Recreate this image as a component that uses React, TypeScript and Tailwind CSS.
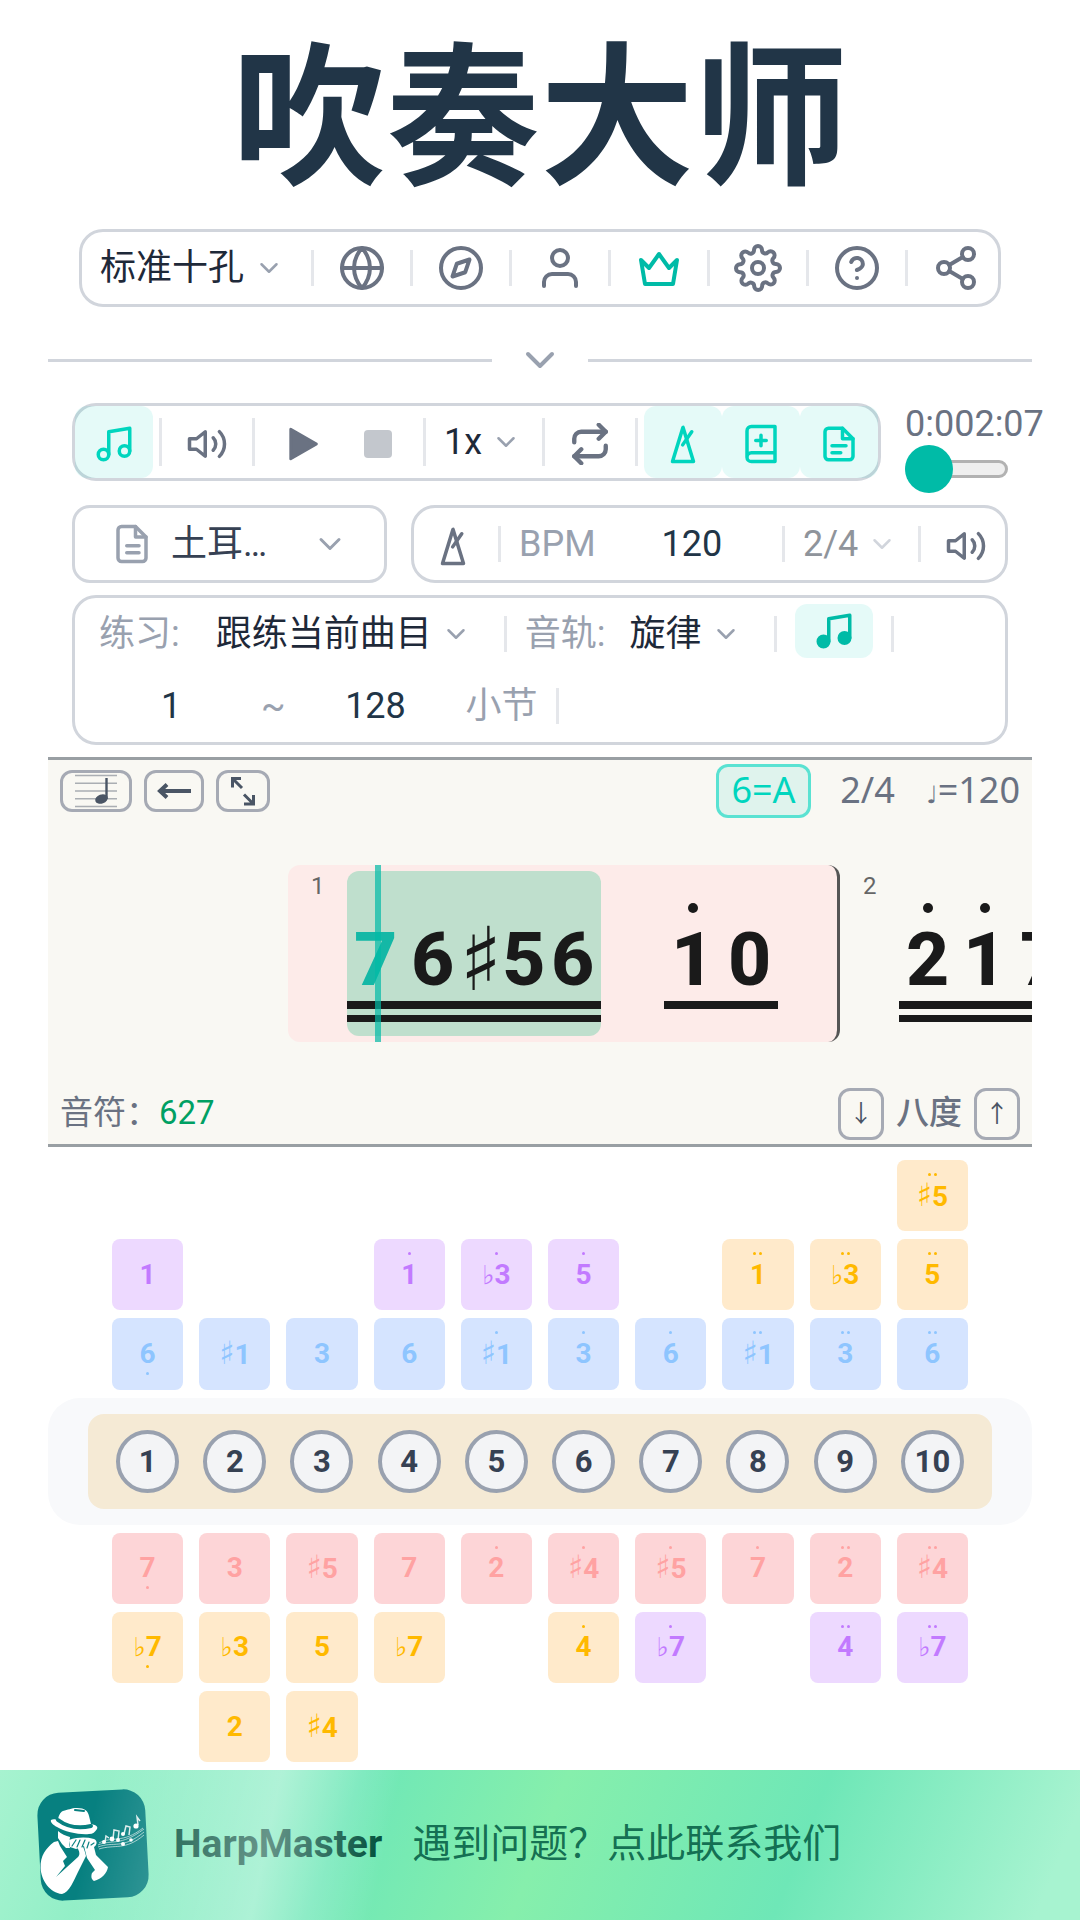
import React from 'react'
import {
  FiChevronDown,
  FiCompass,
  FiGlobe,
  FiHelpCircle,
  FiMusic,
  FiRepeat,
  FiSettings,
  FiShare2,
  FiUser,
  FiVolume2,
} from 'react-icons/fi'

type SvgProps = { className?: string; children: React.ReactNode }

function Svg({ className, children }: SvgProps) {
  return (
    <svg
      viewBox="0 0 24 24"
      fill="none"
      stroke="currentColor"
      strokeWidth="2"
      strokeLinecap="round"
      strokeLinejoin="round"
      className={className}
      aria-hidden="true"
    >
      {children}
    </svg>
  )
}

const CrownIcon = () => (
  <Svg className="size-12">
    <path d="M3 8l4 4 5-7 5 7 4-4-2 12H5L3 8z" />
  </Svg>
)

const MetronomeIcon = () => (
  <Svg className="size-[42px]">
    <path d="M12 2.5L6 22h12L12 2.5z" />
    <path d="M11.8 12.5l5.2-7.5" />
  </Svg>
)

const BookIcon = () => (
  <Svg className="size-[42px]">
    <path d="M4 19.5v-15A2.5 2.5 0 0 1 6.5 2H20v20H6.5a2.5 2.5 0 0 1 0-5H20" />
    <path d="M12 7v6M9 10h6" />
  </Svg>
)

const SheetIcon = () => (
  <Svg className="size-[42px]">
    <path d="M14 3H6a2 2 0 0 0-2 2v14a2 2 0 0 0 2 2h12a2 2 0 0 0 2-2V9z" />
    <path d="M14 3v6h6M8 13h8M8 17h5" />
  </Svg>
)

const FileIcon = () => (
  <Svg className="size-[42px] shrink-0 text-gray-400">
    <path d="M14 2H6a2 2 0 0 0-2 2v16a2 2 0 0 0 2 2h12a2 2 0 0 0 2-2V8z" />
    <path d="M14 2v6h6M9 13h7M9 17h7" />
  </Svg>
)

const Divider = ({ tall }: { tall?: boolean }) => (
  <span className={tall ? 'h-12 w-[3px] shrink-0 bg-gray-200' : 'h-9 w-[3px] shrink-0 bg-gray-200'} />
)

type SelectProps = { label: string; value: string; className: string; chevron?: string }

function Select({ label, value, className, chevron = 'right-[3px] text-gray-400' }: SelectProps) {
  return (
    <div className="relative flex shrink-0 items-center">
      <select aria-label={label} className={`h-14 appearance-none bg-transparent ${className}`}>
        <option>{value}</option>
      </select>
      <FiChevronDown className={`pointer-events-none absolute size-[30px] ${chevron}`} />
    </div>
  )
}

type ToolProps = { label: string; active?: boolean; children: React.ReactNode }

function Tool({ label, active, children }: ToolProps) {
  return (
    <button
      type="button"
      aria-label={label}
      className={`flex h-[72px] w-[78px] shrink-0 items-center justify-center rounded-xl pt-1 ${
        active ? 'bg-teal-400/10 text-teal-400' : 'text-gray-500'
      }`}
    >
      {children}
    </button>
  )
}

const menu = [
  { label: '语言', icon: <FiGlobe className="size-12" /> },
  { label: '发现', icon: <FiCompass className="size-12" /> },
  { label: '我的', icon: <FiUser className="size-12" /> },
  { label: '会员', icon: <CrownIcon />, color: 'text-teal-500' },
  { label: '设置', icon: <FiSettings className="size-12" /> },
  { label: '帮助', icon: <FiHelpCircle className="size-12" /> },
  { label: '分享', icon: <FiShare2 className="size-12" /> },
]

type Note = { text: string; sharp?: boolean; dot?: boolean; current?: boolean }

function Beat({ notes, lines, active }: { notes: Note[]; lines: number; active?: boolean }) {
  return (
    <div className={`h-[165px] rounded-xl pt-8 ${active ? 'bg-[#bfdfcd]' : ''}`}>
      <div className="flex">
        {notes.map((note, i) => (
          <div key={i} className={`flex flex-col items-center gap-[9px] ${note.sharp ? 'w-[83px]' : 'w-[57px]'}`}>
            <span className={`size-2.5 rounded-full ${note.dot ? 'bg-[#1a1a1a]' : ''}`} />
            <span
              className={`flex h-[75px] text-[75px] leading-[75px] font-extrabold ${
                note.current ? 'text-[#14b8a6]' : 'text-[#1a1a1a]'
              }`}
            >
              {note.sharp && <span className="font-['DejaVu_Sans'] text-[88px] leading-[75px]">♯</span>}
              {note.text}
            </span>
          </div>
        ))}
      </div>
      <div className="mt-1 flex flex-col gap-1.5">
        <div className="h-2 bg-[#1a1a1a]" />
        {lines > 1 && <div className="h-[7px] bg-[#1a1a1a]" />}
      </div>
    </div>
  )
}

const tones = {
  purple: 'bg-[#edd9ff] text-purple-400',
  blue: 'bg-[#d5e4ff] text-[#8ec5ff]',
  orange: 'bg-[#ffeacb] text-amber-400',
  red: 'bg-[#fdd5d7] text-[#ffa2a2]',
}

type Pad = { n: string; tone: keyof typeof tones; up?: number; down?: number } | null

const p = (n: string, tone: keyof typeof tones, up = 0, down = 0): Pad => ({ n, tone, up, down })

const blowRows: Pad[][] = [
  [null, null, null, null, null, null, null, null, null, p('♯5', 'orange', 2)],
  [
    p('1', 'purple'), null, null, p('1', 'purple', 1), p('♭3', 'purple', 1), p('5', 'purple', 1), null,
    p('1', 'orange', 2), p('♭3', 'orange', 2), p('5', 'orange', 2),
  ],
  [
    p('6', 'blue', 0, 1), p('♯1', 'blue'), p('3', 'blue'), p('6', 'blue'), p('♯1', 'blue', 1),
    p('3', 'blue', 1), p('6', 'blue', 1), p('♯1', 'blue', 2), p('3', 'blue', 2), p('6', 'blue', 2),
  ],
]

const drawRows: Pad[][] = [
  [
    p('7', 'red', 0, 1), p('3', 'red'), p('♯5', 'red'), p('7', 'red'), p('2', 'red', 1),
    p('♯4', 'red', 1), p('♯5', 'red', 1), p('7', 'red', 1), p('2', 'red', 2), p('♯4', 'red', 2),
  ],
  [
    p('♭7', 'orange', 0, 1), p('♭3', 'orange'), p('5', 'orange'), p('♭7', 'orange'), null,
    p('4', 'orange', 1), p('♭7', 'purple', 1), null, p('4', 'purple', 2), p('♭7', 'purple', 2),
  ],
  [null, p('2', 'orange'), p('♯4', 'orange'), null, null, null, null, null, null, null],
]

function Dots({ count, className }: { count: number; className: string }) {
  return (
    <span className={`absolute inset-x-0 flex justify-center gap-[3px] ${className}`}>
      {Array.from({ length: count }, (_, i) => (
        <i key={i} className="size-[3px] rounded-full bg-current" />
      ))}
    </span>
  )
}

function PadLabel({ text }: { text: string }) {
  const sign = text.length > 1 ? text[0] : ''
  return (
    <span className="flex items-baseline">
      {sign && (
        <span
          className={`font-['DejaVu_Sans'] ${
            sign === '♭' ? 'text-[26px] leading-none font-normal' : 'text-[32px] leading-[28px]'
          }`}
        >
          {sign}
        </span>
      )}
      <span>{text.slice(-1)}</span>
    </span>
  )
}

function PadRow({ pads }: { pads: Pad[] }) {
  return (
    <div className="grid grid-cols-10 gap-4 px-16">
      {pads.map((pad, i) =>
        pad ? (
          <div
            key={i}
            className={`relative flex aspect-square items-center justify-center rounded-lg text-[28px] leading-none font-bold ${tones[pad.tone]}`}
          >
            {!!pad.up && <Dots count={pad.up} className="top-[13px]" />}
            <PadLabel text={pad.n} />
            {!!pad.down && <Dots count={pad.down} className="bottom-[15px]" />}
          </div>
        ) : (
          <div key={i} className="aspect-square" />
        )
      )}
    </div>
  )
}

function Logo() {
  return (
    <svg viewBox="0 0 114 114" className="size-[114px] shrink-0" aria-hidden="true">
      <rect x="3" y="3" width="108" height="108" rx="22" fill="#078080" transform="rotate(-3 57 57)" />
      <g fill="#fff">
        <path d="M22 33c0-4 2-9 5-10 5-1 8-3 14-3 8 0 11 3 12 8l2 8c6 1 7 3 6 5-2 3-4 5-8 5-9 1-24-2-32-7-4-2-7-5-6-7 2-1 5-1 7 1z" />
        <path d="M22 43c3 3 8 5 12 6l-1 7 1 4h-4l-4-4-4-6z" />
        <path d="M18 54C10 60 4 68 4.600 80 5 92 14 105 26 106c7-1 12-14 16-22l8-16c-1-4-2-8-4-11l-5 2c3 5 3 8 1 10L20 89l9-11-2-5 4-4-7-11-2-5z" />
        <path d="M33 52c9-3 17-3 25-1 4 2 3 6 0 8l2 8 12 12c-1 6-6 12-14 14-3-2-3-5-2-8l3-3-8-12-3-12-8 3-6-2z" />
      </g>
      <g fill="none" stroke="#078080" strokeLinecap="round">
        <path d="M22 32c8 6 20 9 33 6" strokeWidth="4" />
        <path d="M39 22l9 1" strokeWidth="2" />
        <path d="M36 58l4-6M41 59l3-7M46 59l3-7M51 60l2-6M55 57l3-2" strokeWidth="1.200" />
      </g>
      <g fill="none" stroke="#fff" strokeWidth="0.7" opacity="0.85">
        <path d="M62 57c14-6 22 2 46-16M62 59c16-6 24 3 46-15M63 61c16-5 26 2 45-14M63 55c12-7 24 1 44-15" />
        <path d="M69 54l1-6 3 2M77 51l1-9 5 1-1 9M88 46l2-8 4 1-1 8M102 37l-1-8 3 4" strokeWidth="1.5" />
      </g>
      <g fill="#fff">
        <circle cx="68" cy="54" r="2" />
        <circle cx="76" cy="51" r="2.4" />
        <circle cx="82" cy="52" r="2" />
        <circle cx="87" cy="56" r="2" />
        <circle cx="87" cy="46" r="2" />
        <circle cx="100" cy="38" r="2.6" />
        <circle cx="95" cy="52" r="1.8" />
      </g>
    </svg>
  )
}

export default function App() {
  const scoreButton = 'flex h-[42px] items-center justify-center rounded-xl border-[3px] border-[#a6aab4] text-gray-600'
  const octaveButton =
    'flex h-[52px] w-[46px] items-center justify-center rounded-xl border-[3px] border-[#a6aab4] text-2xl leading-none text-gray-600'

  return (
    <div className="flex min-h-screen flex-col overflow-hidden bg-white font-[Roboto,'Noto_Sans_CJK_SC','DejaVu_Sans',sans-serif] text-4xl text-gray-800">
      <main className="flex flex-col px-12">
        <h1 className="mt-11 text-center text-[154px] leading-[154px] font-bold text-[#213547]">吹奏大师</h1>

        <nav className="mx-auto mt-[31px] flex h-[78px] items-center gap-6 rounded-3xl border-[3px] border-gray-300 px-[18px]">
          <Select label="口琴类型" value="标准十孔" className="w-[187px]" />
          {menu.map((item) => (
            <React.Fragment key={item.label}>
              <Divider />
              <button type="button" aria-label={item.label} className={item.color ?? 'text-gray-500'}>
                {item.icon}
              </button>
            </React.Fragment>
          ))}
        </nav>

        <div className="mt-[29px] flex items-center gap-6 text-gray-400">
          <span className="h-[3px] flex-1 bg-gray-300" />
          <button type="button" aria-label="展开">
            <FiChevronDown className="size-12" />
          </button>
          <span className="h-[3px] flex-1 bg-gray-300" />
        </div>

        <div className="px-6">
          <div className="mt-[19px] flex items-start gap-6">
            <div className="flex h-[78px] shrink-0 items-center gap-1.5 rounded-3xl border-[3px] border-gray-300">
              <Tool label="音符" active>
                <FiMusic className="size-[42px]" />
              </Tool>
              <Divider tall />
              <Tool label="音量">
                <FiVolume2 className="size-[42px]" />
              </Tool>
              <Divider tall />
              <div className="flex">
                <Tool label="播放">
                  <Svg className="size-[42px]">
                    <path d="M6.7 3.5v17L21.4 12z" fill="currentColor" strokeWidth="1.6" />
                  </Svg>
                </Tool>
                <Tool label="停止">
                  <span className="size-7 rounded-sm bg-gray-500/40" />
                </Tool>
              </div>
              <Divider tall />
              <Select label="速度" value="1x" className="w-[104px] pl-3" chevron="right-[15px] text-gray-400" />
              <Divider tall />
              <Tool label="循环">
                <FiRepeat className="size-[42px] stroke-[2.5]" />
              </Tool>
              <Divider tall />
              <div className="flex">
                <Tool label="节拍器" active>
                  <MetronomeIcon />
                </Tool>
                <Tool label="曲库" active>
                  <BookIcon />
                </Tool>
                <Tool label="曲谱" active>
                  <SheetIcon />
                </Tool>
              </div>
            </div>

            <div className="flex min-w-0 flex-1 flex-col">
              <div className="flex justify-between leading-[42px] text-gray-500">
                <span>0:00</span>
                <span>2:07</span>
              </div>
              <input
                type="range"
                aria-label="进度"
                min={0}
                max={127}
                defaultValue={0}
                className="h-12 w-full appearance-none bg-transparent [&::-webkit-slider-runnable-track]:h-[18px] [&::-webkit-slider-runnable-track]:rounded-full [&::-webkit-slider-runnable-track]:border-[3px] [&::-webkit-slider-runnable-track]:border-[#b2b2b2] [&::-webkit-slider-runnable-track]:bg-[#efefef] [&::-webkit-slider-thumb]:-mt-[18px] [&::-webkit-slider-thumb]:-ml-[3px] [&::-webkit-slider-thumb]:size-12 [&::-webkit-slider-thumb]:appearance-none [&::-webkit-slider-thumb]:rounded-full [&::-webkit-slider-thumb]:bg-teal-500"
              />
            </div>
          </div>

          <div className="mt-3 flex gap-6">
            <button
              type="button"
              className="flex h-[78px] w-[315px] items-center gap-[18px] rounded-[18px] border-[3px] border-gray-300 px-9 text-gray-700"
            >
              <FileIcon />
              <span className="flex-1 text-left">土耳…</span>
              <FiChevronDown className="size-9 text-gray-400" />
            </button>

            <div className="flex h-[78px] min-w-0 flex-1 items-center rounded-3xl border-[3px] border-gray-300">
              <Tool label="节拍器">
                <MetronomeIcon />
              </Tool>
              <span className="w-1.5" />
              <Divider />
              <label htmlFor="bpm" className="pl-[18px] text-gray-400">
                BPM
              </label>
              <input
                id="bpm"
                defaultValue="120"
                className="min-w-0 flex-1 bg-transparent pl-1.5 text-center text-[#213547]"
              />
              <Divider />
              <Select
                label="拍号"
                value="2/4"
                className="w-[133px] pl-[18px] text-[#8f949b]"
                chevron="right-[21px] text-gray-300"
              />
              <Divider />
              <span className="w-1.5" />
              <Tool label="节拍音量">
                <FiVolume2 className="size-[42px]" />
              </Tool>
            </div>
          </div>

          <div className="mt-3 rounded-3xl border-[3px] border-gray-300 pl-6">
            <div className="flex h-[72px] items-center gap-[18px]">
              <span className="text-gray-400">练习:</span>
              <Select
                label="练习"
                value="跟练当前曲目"
                className="w-[288px] pl-[18px]"
                chevron="right-[15px] text-gray-400"
              />
              <Divider />
              <span className="text-gray-400">音轨:</span>
              <Select label="音轨" value="旋律" className="w-[133px] pl-1.5" chevron="right-[15px] text-gray-400" />
              <Divider />
              <button
                type="button"
                aria-label="试听"
                className="-mt-1.5 flex h-[54px] w-[78px] items-center justify-center rounded-xl bg-teal-400/10 text-teal-500"
              >
                <FiMusic className="size-[42px] [&_circle]:fill-current" />
              </button>
              <Divider />
            </div>
            <div className="flex h-[72px] items-center gap-[18px] text-gray-400">
              <input aria-label="起始小节" defaultValue="1" className="w-36 bg-transparent text-center text-[#213547]" />
              <span>~</span>
              <input aria-label="结束小节" defaultValue="128" className="w-36 bg-transparent text-center text-[#213547]" />
              <span>小节</span>
              <Divider />
            </div>
          </div>
        </div>

        <section className="mt-3 overflow-hidden border-y-[3px] border-[#999fa3] bg-[#f9f8f3]">
          <div className="mt-1 flex items-center gap-3 px-3 font-['Noto_Sans','DejaVu_Sans',sans-serif] text-gray-500">
            <button type="button" aria-label="五线谱" className={`${scoreButton} w-[72px]`}>
              <svg viewBox="0 0 42 34" className="h-[34px] w-[42px]">
                <path
                  d="M0 1.5h42M0 9.2h42M0 17h42M0 24.8h42M0 32.5h42"
                  stroke="currentColor"
                  strokeOpacity="0.45"
                  strokeWidth="1.4"
                />
                <ellipse cx="26.5" cy="25" rx="6.5" ry="4.5" fill="currentColor" transform="rotate(-20 26.5 25)" />
                <path d="M31.5 4v21" stroke="currentColor" strokeWidth="2.4" />
              </svg>
            </button>
            <button type="button" aria-label="方向" className={`${scoreButton} w-[60px]`}>
              <svg viewBox="0 0 36 18" className="h-[18px] w-9" fill="none" stroke="currentColor" strokeWidth="4">
                <path d="M35 9H4M11 2.5L4 9l7 6.5" />
              </svg>
            </button>
            <button type="button" aria-label="全屏" className={`${scoreButton} w-[54px]`}>
              <svg viewBox="0 0 30 30" className="size-[30px]" fill="none" stroke="currentColor" strokeWidth="3">
                <path d="M13 2.500H4.500v9M5 3l9 9M16 28h9.500v-9M25 27.500l-9-9" />
              </svg>
            </button>
            <div className="ml-auto flex items-center gap-6 leading-10">
              <button
                type="button"
                className="h-[54px] w-[95px] rounded-xl border-[3px] border-teal-400/60 bg-teal-400/10 pb-0.5 text-center text-teal-400"
              >
                6=A
              </button>
              <span className="w-[65px] pb-0.5 text-center">2/4</span>
              <span className="w-24 pb-0.5 text-right">
                <span className="text-2xl">♩</span>=120
              </span>
            </div>
          </div>

          <div className="relative mt-[47px] mb-[46px] flex pl-60">
            <div className="relative flex shrink-0 gap-[63px] rounded-xl border-r-[3px] border-[#555] bg-[#fdebe9] px-[59px] py-1.5">
              <span className="absolute top-[7px] left-[23px] text-2xl leading-7 text-[#666]">1</span>
              <Beat
                active
                lines={2}
                notes={[{ text: '7', current: true }, { text: '6' }, { text: '5', sharp: true }, { text: '6' }]}
              />
              <Beat lines={1} notes={[{ text: '1', dot: true }, { text: '0' }]} />
              <span className="absolute inset-y-0 left-[87px] w-1.5 bg-teal-500/70" />
            </div>
            <div className="relative flex shrink-0 px-[59px] py-1.5">
              <span className="absolute top-[7px] left-[23px] text-2xl leading-7 text-[#666]">2</span>
              <Beat lines={2} notes={[{ text: '2', dot: true }, { text: '1', dot: true }, { text: '7' }]} />
            </div>
          </div>

          <div className="mb-1 flex items-center px-3 text-[33px] text-gray-500">
            <span className="pb-0.5">音符：</span>
            <span className="pb-0.5 text-[#00a063]">627</span>
            <div className="ml-auto flex items-center gap-3">
              <button type="button" aria-label="降低八度" className={octaveButton}>
                ↓
              </button>
              <span className="pb-0.5 font-medium">八度</span>
              <button type="button" aria-label="升高八度" className={octaveButton}>
                ↑
              </button>
            </div>
          </div>
        </section>

        <section className="mt-[13px] mb-[7px] flex flex-col gap-2">
          {blowRows.map((row, i) => (
            <PadRow key={i} pads={row} />
          ))}
          <div className="rounded-4xl bg-[#f8f9fb] px-10 py-4">
            <div className="grid grid-cols-10 justify-items-center gap-4 rounded-2xl bg-[#f5ead5] px-6 py-4">
              {[1, 2, 3, 4, 5, 6, 7, 8, 9, 10].map((hole) => (
                <span
                  key={hole}
                  className="flex size-[63px] items-center justify-center rounded-full border-4 border-gray-400 bg-gray-100 text-[31px] leading-none font-bold text-gray-700"
                >
                  {hole}
                </span>
              ))}
            </div>
          </div>
          {drawRows.map((row, i) => (
            <PadRow key={i} pads={row} />
          ))}
        </section>
      </main>

      <footer className="relative mt-auto overflow-hidden bg-[linear-gradient(112deg,#a7f3d0_0%,#6ee7b7_32%,#86efac_50%,#6ee7b7_73%,#a7f3d0_96%)]">
        <a href="#contact" className="flex h-[150px] items-center pl-9 text-[39px]">
          <Logo />
          <strong className="ml-6 font-bold text-[#004f3b]">HarpMaster</strong>
          <span className="ml-[30px] text-[#065f46]/90">遇到问题？点此联系我们</span>
        </a>
        <div className="pointer-events-none absolute inset-y-0 left-[86px] w-[300px] -skew-x-12 bg-linear-to-r from-transparent via-white/40 via-60% to-transparent" />
      </footer>
    </div>
  )
}
